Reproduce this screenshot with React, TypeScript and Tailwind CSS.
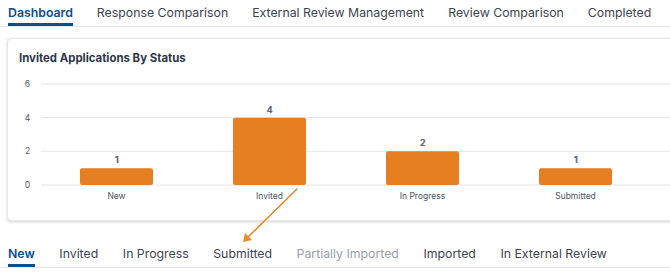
const topTabs = ['Dashboard', 'Response Comparison', 'External Review Management', 'Review Comparison', 'Completed']
const statusTabs = ['New', 'Invited', 'In Progress', 'Submitted', 'Partially Imported', 'Imported', 'In External Review']

const data = [
  { label: 'New', value: 1 },
  { label: 'Invited', value: 4 },
  { label: 'In Progress', value: 2 },
  { label: 'Submitted', value: 1 },
]

const ZERO_Y = 115
const UNIT = 16.83

function TabBar({ tabs, active, muted, wide }: { tabs: string[]; active: string; muted?: string; wide?: boolean }) {
  return (
    <nav className={`flex px-2 border-b border-gray-200 ${wide ? 'gap-[24.6px]' : 'gap-6'}`}>
      {tabs.map((t) => {
        const on = t === active
        const color = on ? 'text-[#0d4f8b] font-semibold border-[#0d4f8b]' : t === muted ? 'text-[#9aa1ab] border-transparent' : 'text-[#3d4451] border-transparent'
        return (
          <span key={t} className={`pt-[5px] pb-[2px] border-b-[3px] text-[12.3px] leading-4 whitespace-nowrap ${color}`}>
            {t}
          </span>
        )
      })}
    </nav>
  )
}

function StatusChart() {
  return (
    <svg width="672" height="140" className="block mt-[4px]" fontFamily="Inter, sans-serif">
      {[0, 2, 4, 6].map((v) => {
        const y = ZERO_Y - v * UNIT
        return (
          <g key={v}>
            <line x1="33" x2="672" y1={y} y2={y} stroke="#e6e6e6" strokeWidth="1" />
            <text x="19.5" y={y + 3} fontSize="8.5" fill="#555c66" textAnchor="middle">{v}</text>
          </g>
        )
      })}
      {data.map((d, i) => {
        const cx = 108.5 + i * 153
        const top = ZERO_Y - d.value * UNIT
        return (
          <g key={d.label}>
            <rect x={cx - 36.5} y={top} width="73" height={ZERO_Y - top} rx="2" fill="#e67f22" />
            <text x={cx} y={top - 5} fontSize="9" fontWeight="500" fill="#555a62" textAnchor="middle" className="[text-shadow:0.8px_0_0_#9a9ea5]">{d.value}</text>
            <text x={cx} y={128.5} fontSize="8.5" fill="#4b5563" textAnchor="middle">{d.label}</text>
          </g>
        )
      })}
    </svg>
  )
}

export default function App() {
  return (
    <div className="relative w-[670px] h-[278px] overflow-hidden bg-white font-['Inter',sans-serif]">
      <TabBar tabs={topTabs} active="Dashboard" />

      <section className="mt-[11px] ml-[7px] w-[680px] h-[183px] bg-white border border-gray-200 rounded shadow-[0_1px_3px_rgba(0,0,0,0.18)]">
        <h2 className="pt-[11px] px-[11px] text-[11.4px] leading-4 font-bold text-[#2d3748]">Invited Applications By Status</h2>
        <StatusChart />
      </section>

      <div className="mt-[20px]">
        <TabBar tabs={statusTabs} active="New" muted="Partially Imported" wide />
      </div>

      <svg className="absolute left-0 top-0 pointer-events-none" width="670" height="278">
        <line x1="297" y1="189" x2="247" y2="238" stroke="#ee8a25" strokeWidth="1.6" strokeLinecap="round" />
        <path d="M243 242 L245 233 L252 240 Z" fill="#ee8a25" />
      </svg>
    </div>
  )
}
